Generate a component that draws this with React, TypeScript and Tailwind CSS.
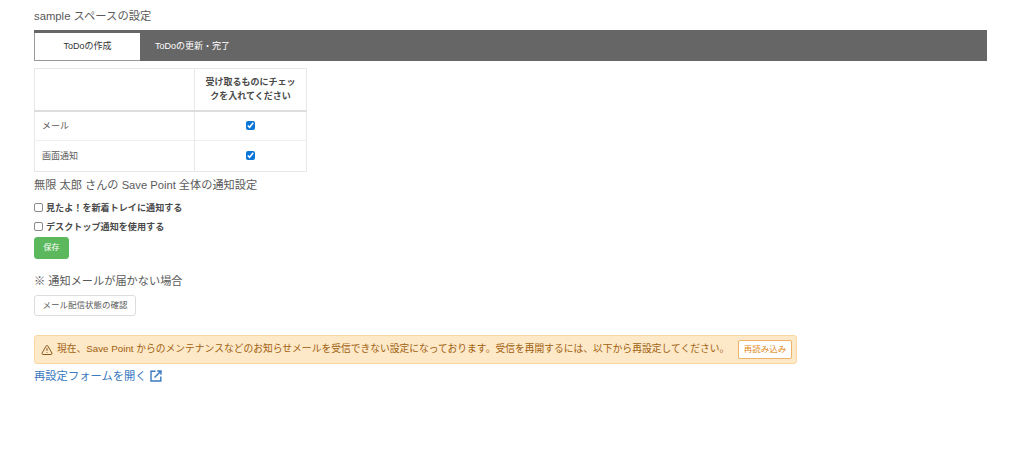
import { TriangleAlert } from "lucide-react";

const font = "font-['Liberation_Sans','Noto_Sans_CJK_JP',sans-serif]";

function App() {
  return (
    <div className={`${font} h-[457px] w-[1024px] overflow-hidden bg-white px-[34px] pt-[9px] text-[#5a5a5a]`}>
      <h2 className="text-[11.3px] leading-[14px] font-normal">sample スペースの設定</h2>

      {/* Tabs */}
      <div className="mt-[7px] flex h-[31px] w-[953px] bg-[#666] pt-[3px]">
        <div className="flex h-[28px] w-[106px] items-center justify-center border-b border-l border-[#999] bg-white text-[9px] text-[#333]">
          ToDoの作成
        </div>
        <div className="flex w-[105px] items-center justify-center text-[9px] text-white">ToDoの更新・完了</div>
      </div>

      {/* Table */}
      <table className="mt-[7px] w-[273px] table-fixed border-collapse border border-[#e8e8e8] text-[9px]">
        <thead>
          <tr className="h-[42px] border-b-2 border-[#ddd]">
            <th className="w-[160px] border-r border-[#e8e8e8]"></th>
            <th className="px-[8px] text-center leading-[14px] font-bold text-[#4a4a4a]">
              受け取るものにチェックを入れてください
            </th>
          </tr>
        </thead>
        <tbody>
          <tr className="h-[30px] border-b border-[#eee]">
            <td className="border-r border-[#e8e8e8] pt-px pl-[7px]">メール</td>
            <td className="text-center">
              <input type="checkbox" defaultChecked className="inline-block size-[9px] align-middle accent-[#0a76d8]" />
            </td>
          </tr>
          <tr className="h-[31px]">
            <td className="border-r border-[#e8e8e8] pt-px pl-[7px]">画面通知</td>
            <td className="text-center">
              <input type="checkbox" defaultChecked className="inline-block size-[9px] align-middle accent-[#0a76d8]" />
            </td>
          </tr>
        </tbody>
      </table>

      <h3 className="mt-[6px] text-[11.2px] leading-[15px] font-normal">無限 太郎 さんの Save Point 全体の通知設定</h3>

      <label className="mt-[10px] flex h-[12px] items-center gap-[3px] text-[9.1px] font-bold text-[#4a4a4a]">
        <input type="checkbox" className="-mt-[3px] size-[9px] appearance-none rounded-[2px] border border-[#8a8a8a] bg-white" />
        見たよ！を新着トレイに通知する
      </label>
      <label className="mt-[7px] flex h-[12px] items-center gap-[3px] text-[9.1px] font-bold text-[#4a4a4a]">
        <input type="checkbox" className="-mt-[3px] size-[9px] appearance-none rounded-[2px] border border-[#8a8a8a] bg-white" />
        デスクトップ通知を使用する
      </label>

      <button className="mt-[3px] block h-[22px] w-[35px] rounded-[3px] border border-[#5cb85c] bg-[#5cb85c] text-[8px] text-white">
        保存
      </button>

      <p className="mt-[15px] text-[11.2px] leading-[15px]">※ 通知メールが届かない場合</p>

      <button className="mt-[6px] block h-[21px] w-[102px] rounded-[3px] border border-[#ddd] bg-white text-[8.5px] text-[#5a5a5a]">
        メール配信状態の確認
      </button>

      {/* Warning */}
      <div className="mt-[19px] flex h-[29px] w-[763px] items-center rounded-[3px] border border-[#fad7a0] bg-[#fde8c8] pr-[4px] pl-[6px] text-[#a0610f]">
        <TriangleAlert className="size-[12px] text-[#8a5a1c]" strokeWidth={2} />
        <span className="ml-[4px] flex-1 text-[9.78px] whitespace-nowrap">
          現在、Save Point からのメンテナンスなどのお知らせメールを受信できない設定になっております。受信を再開するには、以下から再設定してください。
        </span>
        <button className="h-[19px] w-[54px] rounded-[2px] border border-[#eeb368] bg-white text-[8.5px] text-[#e08a20]">
          再読み込み
        </button>
      </div>

      <a className="mt-[5px] flex items-center gap-[3px] text-[11.3px] leading-[14px] text-[#3a78c0]">
        再設定フォームを開く
        <svg viewBox="0 0 12 12" className="size-[12px]" fill="none" stroke="currentColor" strokeWidth={1.4}>
          <path d="M5.5 1.2H1v9.8h9.8V6.5" />
          <path d="M4.5 7.5 10.8 1.2M7.2 1H11v3.8" />
        </svg>
      </a>
    </div>
  );
}

export default App;
